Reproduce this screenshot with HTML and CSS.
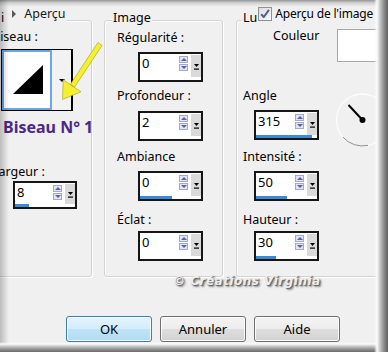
FILE: index.html
```html
<!DOCTYPE html>
<html lang="fr">
<head>
<meta charset="utf-8">
<title>Biseau intérieur</title>
<link rel="stylesheet" href="styles.css">
</head>
<body>
<div class="dialog">
  <div class="panels">
    <section class="box box-left">
      <div class="legend legend-left">
        <span class="legend-text">i</span>
        <span class="toggle"><span class="tri"></span>Aperçu</span>
      </div>
      <div class="lbl lbl-biseau">Biseau :</div>
      <div class="preset">
        <div class="preset-preview">
          <svg width="46" height="56" viewBox="0 0 46 56"><polygon points="9,42 39,13 39,42" fill="#000"/></svg>
        </div>
        <div class="preset-drop"><span class="caret"></span></div>
      </div>
      <div class="preset-name">Biseau N° 1</div>
      <div class="lbl lbl-largeur">Largeur :</div>
      <div class="spin spin-sm spin-largeur">
        <div class="spin-main">
          <span class="spin-val">8</span>
          <span class="spin-arrows"><span class="arr up"></span><span class="arr down"></span></span>
          <span class="spin-drop"><svg width="5" height="7" viewBox="0 0 5 7"><polygon points="0,1 5,1 2.5,4" fill="#000"/><rect x="0" y="5.5" width="5" height="1.2" fill="#000"/></svg></span>
        </div>
        <div class="spin-bar"><div class="fill" style="width:23%"></div></div>
      </div>
    </section>

    <section class="box box-image">
      <div class="legend">Image</div>
      <div class="lbl lbl-a">Régularité :</div>
      <div class="spin spin-a">
        <div class="spin-main">
          <span class="spin-val">0</span>
          <span class="spin-arrows"><span class="arr up"></span><span class="arr down"></span></span>
          <span class="spin-drop"><svg width="5" height="7" viewBox="0 0 5 7"><polygon points="0,1 5,1 2.5,4" fill="#000"/><rect x="0" y="5.5" width="5" height="1.2" fill="#000"/></svg></span>
        </div>
        <div class="spin-bar"><div class="fill" style="width:0%"></div></div>
      </div>
      <div class="lbl lbl-b">Profondeur :</div>
      <div class="spin spin-b">
        <div class="spin-main">
          <span class="spin-val">2</span>
          <span class="spin-arrows"><span class="arr up"></span><span class="arr down"></span></span>
          <span class="spin-drop"><svg width="5" height="7" viewBox="0 0 5 7"><polygon points="0,1 5,1 2.5,4" fill="#000"/><rect x="0" y="5.5" width="5" height="1.2" fill="#000"/></svg></span>
        </div>
        <div class="spin-bar"><div class="fill" style="width:0%"></div></div>
      </div>
      <div class="lbl lbl-c">Ambiance</div>
      <div class="spin spin-c">
        <div class="spin-main">
          <span class="spin-val">0</span>
          <span class="spin-arrows"><span class="arr up"></span><span class="arr down"></span></span>
          <span class="spin-drop"><svg width="5" height="7" viewBox="0 0 5 7"><polygon points="0,1 5,1 2.5,4" fill="#000"/><rect x="0" y="5.5" width="5" height="1.2" fill="#000"/></svg></span>
        </div>
        <div class="spin-bar"><div class="fill" style="width:52%"></div></div>
      </div>
      <div class="lbl lbl-d">Éclat :</div>
      <div class="spin spin-d">
        <div class="spin-main">
          <span class="spin-val">0</span>
          <span class="spin-arrows"><span class="arr up"></span><span class="arr down"></span></span>
          <span class="spin-drop"><svg width="5" height="7" viewBox="0 0 5 7"><polygon points="0,1 5,1 2.5,4" fill="#000"/><rect x="0" y="5.5" width="5" height="1.2" fill="#000"/></svg></span>
        </div>
        <div class="spin-bar"><div class="fill" style="width:0%"></div></div>
      </div>
    </section>

    <section class="box box-light">
      <div class="legend legend-light">
        <span class="legend-text">Lu</span>
        <span class="check"><svg width="14" height="14" viewBox="0 0 14 14"><defs><linearGradient id="cg" x1="0" y1="0" x2="1" y2="1"><stop offset="0" stop-color="#dcdcdc"/><stop offset="1" stop-color="#fbfbfb"/></linearGradient></defs><rect x="0.5" y="0.5" width="13" height="13" fill="url(#cg)" stroke="#8e8f8f"/><path d="M3.2 7.2 L5.8 10 L11 2.8" stroke="#4a5f94" stroke-width="2" fill="none" stroke-linejoin="round"/></svg></span>
        <span class="check-label">Aperçu de l'image</span>
      </div>
      <div class="couleur-row">
        <span class="lbl">Couleur</span>
        <span class="swatch"></span>
      </div>
      <div class="angle-row">
        <div class="angle-col">
          <div class="lbl">Angle</div>
          <div class="spin spin-angle">
            <div class="spin-main">
              <span class="spin-val">315</span>
              <span class="spin-arrows"><span class="arr up"></span><span class="arr down"></span></span>
              <span class="spin-drop"><svg width="5" height="7" viewBox="0 0 5 7"><polygon points="0,1 5,1 2.5,4" fill="#000"/><rect x="0" y="5.5" width="5" height="1.2" fill="#000"/></svg></span>
            </div>
            <div class="spin-bar"><div class="fill" style="width:92%"></div></div>
          </div>
        </div>
        <svg class="dial" width="56" height="56" viewBox="0 0 56 56">
          <circle cx="27.5" cy="27" r="26" fill="none" stroke="#fdfdfd" stroke-width="1.3"/>
          <path d="M7.9 44.1 A26 26 0 0 0 32.9 52.4" fill="none" stroke="#8c8c8c" stroke-width="1"/>
          <line x1="13.5" y1="12" x2="27.5" y2="27" stroke="#000" stroke-width="2"/>
          <circle cx="27.5" cy="27" r="3" fill="#000"/>
        </svg>
      </div>
      <div class="lbl lbl-c">Intensité :</div>
      <div class="spin spin-c">
        <div class="spin-main">
          <span class="spin-val">50</span>
          <span class="spin-arrows"><span class="arr up"></span><span class="arr down"></span></span>
          <span class="spin-drop"><svg width="5" height="7" viewBox="0 0 5 7"><polygon points="0,1 5,1 2.5,4" fill="#000"/><rect x="0" y="5.5" width="5" height="1.2" fill="#000"/></svg></span>
        </div>
        <div class="spin-bar"><div class="fill" style="width:51%"></div></div>
      </div>
      <div class="lbl lbl-d">Hauteur :</div>
      <div class="spin spin-d">
        <div class="spin-main">
          <span class="spin-val">30</span>
          <span class="spin-arrows"><span class="arr up"></span><span class="arr down"></span></span>
          <span class="spin-drop"><svg width="5" height="7" viewBox="0 0 5 7"><polygon points="0,1 5,1 2.5,4" fill="#000"/><rect x="0" y="5.5" width="5" height="1.2" fill="#000"/></svg></span>
        </div>
        <div class="spin-bar"><div class="fill" style="width:33%"></div></div>
      </div>
    </section>
  </div>

  <div class="buttons">
    <button class="btn btn-default">OK</button>
    <button class="btn">Annuler</button>
    <button class="btn">Aide</button>
  </div>

  <div class="watermark">© Créations Virginia</div>

  <svg class="arrow" width="388" height="352" viewBox="0 0 388 352">
    <polygon points="102.1,45.4 97.9,42.6 70.3,84.4 74.5,87.2" fill="#f3f032" stroke="#a89c18" stroke-width="0.6"/>
    <polygon points="62.5,99.5 63.2,79.8 81,91.8" fill="#f3f032" stroke="#a89c18" stroke-width="0.6"/>
  </svg>

  <div class="frame"></div>
</div>
</body>
</html>
```

FILE: styles.css
```css
* { box-sizing: border-box; }

body {
  margin: 0;
  font-family: "Noto Sans", "DejaVu Sans", sans-serif;
  font-size: 12.5px;
  color: #000;
}

.dialog {
  position: relative;
  width: 388px;
  height: 352px;
  overflow: hidden;
  background: #f0f0f0;
  display: flex;
  flex-direction: column;
}

.panels {
  display: flex;
  align-items: flex-start;
  margin-left: -12px;
  padding-top: 20px;
  flex: none;
}

.box {
  height: 257px;
  border: 1px solid #d3d3d3;
  border-radius: 3px;
  display: flex;
  flex-direction: column;
  align-items: flex-start;
  flex: none;
  box-shadow: inset 1px 1px 0 #fff, 1px 1px 0 #fff;
}
.box-left { width: 104px; }
.box-image { width: 119px; margin-left: 12px; }
.box-light { width: 180px; margin-left: 13px; }

.legend {
  margin-top: -11px;
  line-height: 16px;
  background: #f0f0f0;
  padding: 0 1px;
  display: flex;
  align-items: flex-start;
  white-space: nowrap;
}
.box-image .legend { margin-left: 7px; }
.box-light .legend { margin-left: 5px; }
.box-left .legend { margin-left: 11px; }

.toggle {
  display: flex;
  align-items: center;
  margin: -4px 0 0 8px;
  color: #1a1a1a;
}
.tri {
  width: 0;
  height: 0;
  border-top: 4px solid transparent;
  border-bottom: 4px solid transparent;
  border-left: 4px solid #5a5a5a;
  margin-right: 8px;
}

.lbl { line-height: 16px; white-space: nowrap; }

/* left box */
.lbl-biseau { margin: 3px 0 0 3px; }
.preset {
  margin: 4px 0 0 12px;
  width: 72px;
  height: 62px;
  border: 1px solid #000;
  display: flex;
  background: #f2f2f2;
}
.preset-preview {
  width: 50px;
  height: 100%;
  border: 2px solid #6aa8e3;
  background: #fff;
}
.preset-preview svg { display: block; }
.preset-drop {
  flex: 1;
  display: flex;
  align-items: center;
  justify-content: center;
  border-right: 1px solid #000;
}
.caret {
  width: 0;
  height: 0;
  border-left: 3px solid transparent;
  border-right: 3px solid transparent;
  border-top: 3px solid #000;
  margin-left: 1px;
}
.preset-name {
  margin: 6px 0 0 14px;
  font-weight: 700;
  font-size: 16px;
  line-height: 20px;
  color: #4b2887;
  white-space: nowrap;
}
.lbl-largeur { margin: 27px 0 0 3px; }
.spin-largeur { margin: 1px 0 0 24px; }

/* image box */
.box-image .lbl { margin-left: 12px; }
.box-image .spin { margin-left: 33px; }
.lbl-a { margin-top: 4px; }
.spin-a { margin-top: 6px; }
.lbl-b { margin-top: 6px; }
.spin-b { margin-top: 7px; }
.lbl-c { margin-top: 8px; }
.spin-c { margin-top: 6px; }
.lbl-d { margin-top: 11px; }
.spin-d { margin-top: 3px; }

/* light box */
.box-light .lbl { margin-left: 6px; }
.box-light .spin { margin-left: 17px; }
.legend-light .check { margin: -3px 0 0 1px; display: block; height: 14px; }
.check svg { display: block; }
.check-label {
  margin: -4px 0 0 3px;
  background: #f0f0f0;
  padding-right: 2px;
  font-size: 12px;
  letter-spacing: -0.2px;
}

.couleur-row {
  display: flex;
  align-items: flex-start;
  margin-top: 2px;
}
.box-light .couleur-row .lbl { margin-left: 36px; }
.swatch {
  margin: 1px 0 0 18px;
  width: 60px;
  height: 33px;
  background: #fff;
  border: 1px solid #a9a9a9;
}
.angle-row {
  display: flex;
  align-items: flex-start;
  margin-top: 26px;
}
.angle-col { display: flex; flex-direction: column; align-items: flex-start; }
.angle-col .spin { margin-top: 6px; }
.dial { margin: 5px 0 0 16px; display: block; }
.box-light .lbl-c { margin-top: 0; }

/* spin control */
.spin {
  width: 65px;
  height: 30px;
  border: 2px solid #161616;
  background: #fff;
  display: flex;
  flex-direction: column;
  flex: none;
}
.spin-sm { width: 64px; height: 28px; }
.spin-main { flex: 1; display: flex; min-height: 0; }
.spin-val { flex: 1; padding: 1px 0 0 2px; line-height: 16px; font-size: 13px; }
.spin-arrows {
  width: 9px;
  display: flex;
  flex-direction: column;
  gap: 1px;
  padding-top: 2px;
  margin-right: 2px;
}
.arr {
  height: 7px;
  background: #e0e4f4;
  border: 1px solid #a3a8cc;
  display: flex;
  align-items: center;
  justify-content: center;
}
.arr::before {
  content: "";
  width: 0;
  height: 0;
  border-left: 3px solid transparent;
  border-right: 3px solid transparent;
}
.arr.up::before { border-bottom: 3px solid #5d62a8; }
.arr.down::before { border-top: 3px solid #5d62a8; }
.spin-drop {
  width: 11px;
  background: #dadada;
  border-left: 1px solid #fff;
  border-top: 1px solid #fff;
  display: flex;
  align-items: center;
  justify-content: center;
}
.spin-drop svg { display: block; }
.spin-bar { height: 3px; flex: none; }
.spin-bar .fill { height: 100%; background: #3a8ad8; }

/* buttons */
.buttons {
  display: flex;
  gap: 8px;
  margin: 39px 0 0 66px;
}
.btn {
  width: 86px;
  height: 26px;
  border: 1px solid #707070;
  border-radius: 3px;
  background: linear-gradient(#f4f4f4, #ececec 50%, #dedede 50%, #d2d2d2);
  box-shadow: inset 0 0 0 1px rgba(255, 255, 255, 0.85);
  font: 13px "Noto Sans", "DejaVu Sans", sans-serif;
  color: #000;
  padding: 0;
}
.btn-default {
  border-color: #3c7fb1;
  background: linear-gradient(#e6f5fd, #d1ecfa 50%, #c0e3f6 50%, #b3dcf2);
}

.watermark {
  position: absolute;
  left: 173px;
  top: 274px;
  font: italic 700 12px "DejaVu Sans", sans-serif;
  letter-spacing: 0.5px;
  color: #ededed;
  text-shadow: 1px 1px 1px #5e5e5e, 2px 2px 2px #8a8a8a;
  white-space: nowrap;
}

.arrow {
  position: absolute;
  left: 0;
  top: 0;
  pointer-events: none;
}

.frame {
  position: absolute;
  inset: 0;
  pointer-events: none;
  background:
    linear-gradient(to left, #5e5e5e 0, #8c8c8c 4px, #c6c6c6 8px, #fbfbfb 11px, rgba(250, 250, 250, 0) 14px) right top / 14px 100% no-repeat,
    linear-gradient(to top, #6a6a6a 0, #959595 3px, #cdcdcd 6px, #fbfbfb 8px, rgba(250, 250, 250, 0) 10px) left bottom / 100% 10px no-repeat,
    linear-gradient(rgba(0, 0, 0, 0.38), rgba(0, 0, 0, 0.12) 3px, rgba(0, 0, 0, 0) 7px) left top / 100% 7px no-repeat,
    linear-gradient(to right, rgba(0, 0, 0, 0.22), rgba(0, 0, 0, 0) 9px) left top / 9px 100% no-repeat;
}
```
